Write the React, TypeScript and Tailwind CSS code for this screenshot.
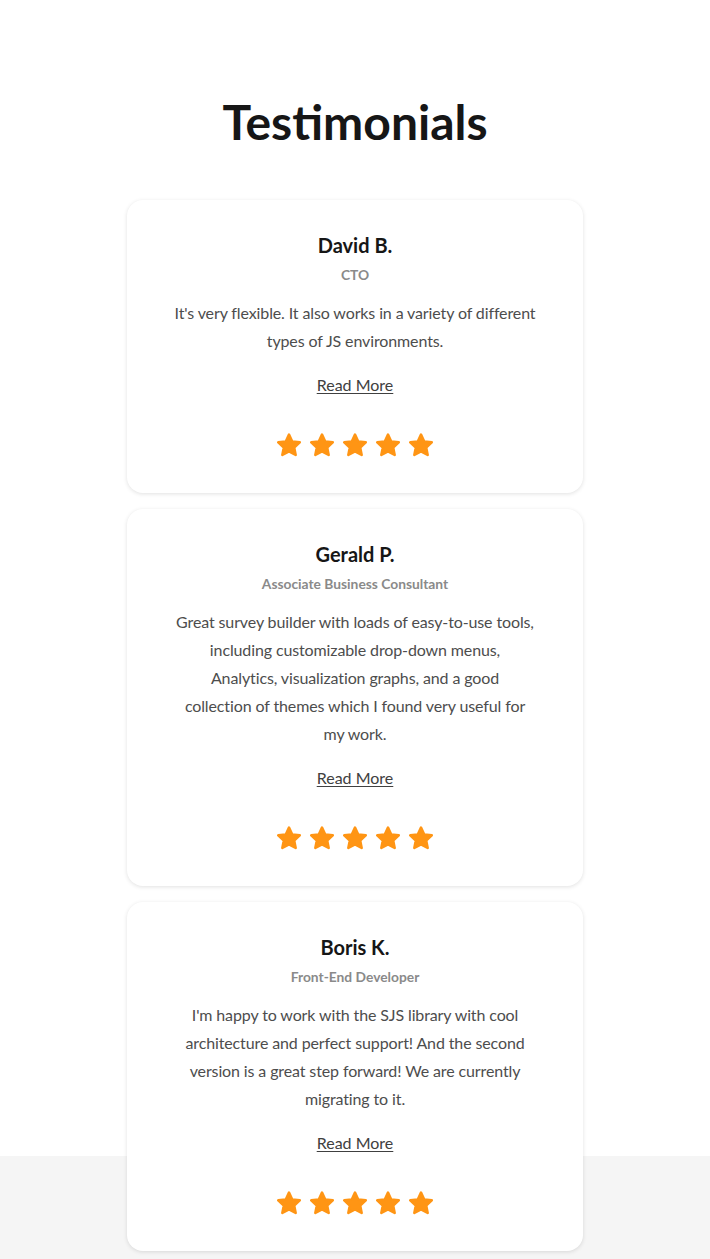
import React from "react";

type Testimonial = {
  name: string;
  role: string;
  lines: string[];
};

// lines are broken as in the original layout
const testimonials: Testimonial[] = [
  {
    name: "David B.",
    role: "CTO",
    lines: ["It's very flexible. It also works in a variety of different", "types of JS environments."],
  },
  {
    name: "Gerald P.",
    role: "Associate Business Consultant",
    lines: [
      "Great survey builder with loads of easy-to-use tools,",
      "including customizable drop-down menus,",
      "Analytics, visualization graphs, and a good",
      "collection of themes which I found very useful for",
      "my work.",
    ],
  },
  {
    name: "Boris K.",
    role: "Front-End Developer",
    lines: [
      "I'm happy to work with the SJS library with cool",
      "architecture and perfect support! And the second",
      "version is a great step forward! We are currently",
      "migrating to it.",
    ],
  },
];

const Star = () => (
  <svg width="24" height="24" viewBox="1.6 1.2 20.8 20.8" aria-hidden="true">
    <path
      d="M12 2.6l2.8 5.95 6.5.78-4.8 4.45 1.28 6.45L12 17.1l-5.78 3.13 1.28-6.45-4.8-4.45 6.5-.78z"
      fill="#FF9514"
      stroke="#FF9514"
      strokeWidth="2.2"
      strokeLinejoin="round"
    />
  </svg>
);

const Card = ({ t }: { t: Testimonial }) => (
  <article className="flex flex-col items-center rounded-2xl bg-white px-10 pt-[31px] pb-[36px] text-center shadow-[0_1px_4px_rgba(0,0,0,0.12)]">
    <h3 className="text-xl leading-7 font-bold text-[#161616]">{t.name}</h3>
    <p className="mt-[6px] text-[13.8px] leading-5 font-bold text-[#8a8a8a]">{t.role}</p>
    <p className="mt-[14px] text-base leading-7 tracking-[-0.12px] whitespace-nowrap text-[#4d4d4d]">
      {t.lines.map((l) => (
        <span key={l} className="block">
          {l}
        </span>
      ))}
    </p>
    <a href="#" className="mt-[18px] text-base leading-6 text-[#404040] underline underline-offset-2">
      Read More
    </a>
    <div className="mt-[36px] flex gap-[9px]">
      {[0, 1, 2, 3, 4].map((i) => (
        <Star key={i} />
      ))}
    </div>
  </article>
);

export default function App() {
  return (
    <div className="min-h-[1259px] bg-white font-['Lato',sans-serif]">
      <section className="relative z-10 flex flex-col items-center pt-[92px] pb-[9px]">
        <h2 className="text-[48px] leading-[60px] font-bold text-[#161616]">Testimonials</h2>
        <div className="mt-[48px] flex w-[456px] flex-col gap-4">
          {testimonials.map((t) => (
            <Card key={t.name} t={t} />
          ))}
        </div>
      </section>
      <div className="-mt-[104px] h-[104px] bg-[#f5f5f5]" />
    </div>
  );
}
